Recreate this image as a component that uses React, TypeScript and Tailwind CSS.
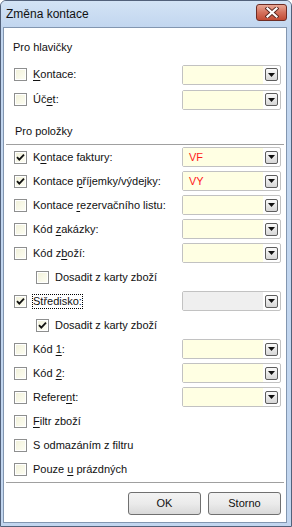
import React from "react";

type Row = {
  pre: string;
  u?: string;
  post?: string;
  checked?: boolean;
  indent?: boolean;
  combo?: "yellow" | "gray";
  value?: string;
  focus?: boolean;
};

const rows: Row[] = [
  { pre: "K", u: "o", post: "ntace faktury:", checked: true, combo: "yellow", value: "VF" },
  { pre: "Kontace ", u: "p", post: "říjemky/výdejky:", checked: true, combo: "yellow", value: "VY" },
  { pre: "Kontace ", u: "r", post: "ezervačního listu:", combo: "yellow" },
  { pre: "Kód ", u: "z", post: "akázky:", combo: "yellow" },
  { pre: "Kód z", u: "b", post: "oží:", combo: "yellow" },
  { pre: "Dosadit z karty zboží", indent: true },
  { pre: "Středisko:", checked: true, combo: "gray", focus: true },
  { pre: "Dosadit z karty zboží", indent: true, checked: true },
  { pre: "Kód ", u: "1", post: ":", combo: "yellow" },
  { pre: "Kód ", u: "2", post: ":", combo: "yellow" },
  { pre: "Refere", u: "n", post: "t:", combo: "yellow" },
  { pre: "", u: "F", post: "iltr zboží" },
  { pre: "S odmazáním z filtru" },
  { pre: "Pouze ", u: "u", post: " prázdných" },
];

const CheckBox = ({ checked }: { checked?: boolean }) => (
  <div className="w-[13px] h-[13px] border border-[#8e8f8f] bg-white p-[1px] shrink-0">
    <div className="w-full h-full bg-gradient-to-br from-[#f2f2dc] to-[#fdfdf2] flex items-center justify-center">
      {checked && (
        <svg width="9" height="9" viewBox="0 0 9 9">
          <path d="M1 4.2 L3.3 6.6 L8 1.6" fill="none" stroke="#111" strokeWidth="1.8" />
        </svg>
      )}
    </div>
  </div>
);

const Combo = ({ kind, value }: { kind: "yellow" | "gray"; value?: string }) => (
  <div className="ml-auto mr-[5px] w-[99px] h-[20px] border border-[#c2c2c2] rounded-[2px] flex bg-white">
    <div
      className={`flex-1 flex items-center pl-[6px] text-[11px] text-[#ff1a1a] ${
        kind === "yellow" ? "bg-[#ffffe3]" : "bg-[#efefef]"
      }`}
    >
      {value}
    </div>
    <div className="w-[17px] flex items-center justify-center">
      <div className="w-[13px] h-[13px] border border-[#5d5d5d] rounded-[2px] bg-gradient-to-b from-[#fafafa] to-[#d6d6d6] flex items-center justify-center">
        <svg width="7" height="4" viewBox="0 0 7 4">
          <path d="M0 0 H7 L3.5 4 Z" fill="#111" />
        </svg>
      </div>
    </div>
  </div>
);

const Label = ({ r }: { r: Row }) => (
  <span
    className={`text-[11px] leading-[13px] text-[#111] ${
      r.focus ? "outline outline-1 outline-dotted outline-black" : ""
    }`}
  >
    {r.pre}
    {r.u && <u className="underline-offset-[2px]">{r.u}</u>}
    {r.post}
  </span>
);

const Line = ({ r, h }: { r: Row; h: string }) => (
  <div className={`flex items-center ${h}`}>
    <div className={`flex items-center gap-[6px] ${r.indent ? "ml-[32px]" : "ml-[10px]"}`}>
      <CheckBox checked={r.checked} />
      <Label r={r} />
    </div>
    {r.combo && <Combo kind={r.combo} value={r.value} />}
  </div>
);

export default function App() {
  return (
    <div className="w-[292px] h-[527px] flex flex-col bg-[#c2d6ef] border border-[#52617a] rounded-t-[6px] font-['Liberation_Sans',Arial,sans-serif] overflow-hidden">
      <div className="h-[26px] flex items-start pl-[5px] pr-[4px] bg-gradient-to-b from-[#d3e3f5] to-[#c2d6ef]">
        <span className="mt-[6px] text-[12px] leading-[14px] text-[#111]">Změna kontace</span>
        <div className="ml-auto mt-[3px] w-[31px] h-[17px] rounded-[3px] border border-[#6e2c24] bg-gradient-to-b from-[#e8a795] via-[#d4715c] to-[#c24a33] flex items-center justify-center">
          <svg width="14" height="11" viewBox="0 0 14 11">
            <path d="M2.5 1.5 L11.5 9.5 M11.5 1.5 L2.5 9.5" stroke="#5a2a22" strokeWidth="4" strokeLinecap="square" />
            <path d="M2.5 1.5 L11.5 9.5 M11.5 1.5 L2.5 9.5" stroke="#fff" strokeWidth="2.2" strokeLinecap="square" />
          </svg>
        </div>
      </div>

      <div className="flex-1 ml-[2px] mr-[4px] mb-[3px] border border-[#8296b0] bg-white flex flex-col">
        <div className="h-[34px] pt-[12px] pl-[9px] text-[11px] leading-[14px] text-[#111]">Pro hlavičky</div>
        <Line r={{ pre: "", u: "K", post: "ontace:", combo: "yellow" }} h="h-[25px]" />
        <Line r={{ pre: "Úč", u: "e", post: "t:", combo: "yellow" }} h="h-[25px]" />

        <div className="h-[33px] pt-[12px] pl-[9px] text-[11px] leading-[14px] text-[#111] border-b border-[#a0a0a0] mx-[2px]">
          Pro položky
        </div>
        {rows.map((r, i) => (
          <Line key={i} r={r} h="h-[24px]" />
        ))}

        <div className="mt-[1px] mx-[2px] border-t border-[#a0a0a0]" />
        <div className="flex justify-end gap-[7px] mt-[9px] mr-[5px]">
          {["OK", "Storno"].map((t) => (
            <button
              key={t}
              className="w-[73px] h-[23px] rounded-[3px] border border-[#707070] bg-gradient-to-b from-[#f3f3f3] via-[#ebebeb] to-[#d9d9d9] text-[11px] text-[#111]"
            >
              {t}
            </button>
          ))}
        </div>
      </div>
    </div>
  );
}
